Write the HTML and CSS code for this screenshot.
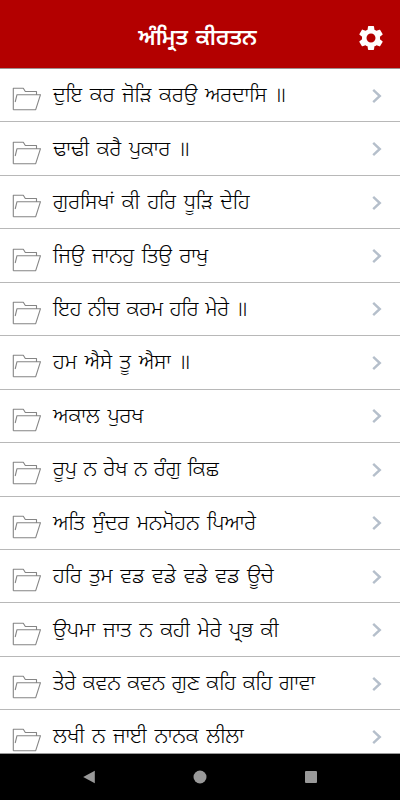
FILE: index.html
```html
<!DOCTYPE html>
<html lang="pa">
<head>
<meta charset="utf-8">
<title>ਅੰਮ੍ਰਿਤ ਕੀਰਤਨ</title>
<link rel="stylesheet" href="styles.css">
</head>
<body>
<svg class="defs" width="0" height="0">
<symbol id="folder" viewBox="0 0 30 24"><path d="M1.3 22.7V1.2h10l2 3.3h11.2V7.2M1.3 22.7h22.4L28.5 7.7H5L3.2 15" fill="none" stroke="#858585" stroke-width="1.1" stroke-linejoin="round"/></symbol>
<symbol id="chevron" viewBox="0 0 10 14"><path d="M1.2.9 7.8 7l-6.6 6.1" fill="none" stroke="#b5bfcb" stroke-width="2.4"/></symbol>
</svg>
<header class="bar">
<h1 class="title">ਅੰਮ੍ਰਿਤ ਕੀਰਤਨ</h1>
<svg class="gear" viewBox="0 0 24 24"><path fill="#fff" d="M19.14 12.94c.04-.3.06-.61.06-.94 0-.32-.02-.64-.07-.94l2.03-1.58c.18-.14.23-.41.12-.61l-1.92-3.32c-.12-.22-.37-.29-.59-.22l-2.39.96c-.5-.38-1.03-.7-1.62-.94l-.36-2.54c-.04-.24-.24-.41-.48-.41h-3.84c-.24 0-.43.17-.47.41l-.36 2.54c-.59.24-1.13.57-1.62.94l-2.39-.96c-.22-.08-.47 0-.59.22L2.74 8.87c-.12.21-.08.47.12.61l2.03 1.58c-.05.3-.09.63-.09.94s.02.64.07.94l-2.03 1.58c-.18.14-.23.41-.12.61l1.92 3.32c.12.22.37.29.59.22l2.39-.96c.5.38 1.03.7 1.62.94l.36 2.54c.05.24.24.41.48.41h3.84c.24 0 .44-.17.47-.41l.36-2.54c.59-.24 1.13-.56 1.62-.94l2.39.96c.22.08.47 0 .59-.22l1.92-3.32c.12-.22.07-.47-.12-.61zM12 15.6c-1.98 0-3.6-1.62-3.6-3.6s1.62-3.6 3.6-3.6 3.6 1.62 3.6 3.6-1.62 3.6-3.6 3.6z"/></svg>
</header>
<ul class="list">
<li class="row"><svg class="folder"><use href="#folder"/></svg><span class="name">ਦੁਇ ਕਰ ਜੋੜਿ ਕਰਉ ਅਰਦਾਸਿ ॥</span><svg class="chev"><use href="#chevron"/></svg></li>
<li class="row"><svg class="folder"><use href="#folder"/></svg><span class="name">ਢਾਢੀ ਕਰੈ ਪੁਕਾਰ ॥</span><svg class="chev"><use href="#chevron"/></svg></li>
<li class="row"><svg class="folder"><use href="#folder"/></svg><span class="name">ਗੁਰਸਿਖਾਂ ਕੀ ਹਰਿ ਧੂੜਿ ਦੇਹਿ</span><svg class="chev"><use href="#chevron"/></svg></li>
<li class="row"><svg class="folder"><use href="#folder"/></svg><span class="name">ਜਿਉ ਜਾਨਹੁ ਤਿਉ ਰਾਖੁ</span><svg class="chev"><use href="#chevron"/></svg></li>
<li class="row"><svg class="folder"><use href="#folder"/></svg><span class="name tight">ਇਹ ਨੀਚ ਕਰਮ ਹਰਿ ਮੇਰੇ ॥</span><svg class="chev"><use href="#chevron"/></svg></li>
<li class="row"><svg class="folder"><use href="#folder"/></svg><span class="name">ਹਮ ਐਸੇ ਤੂ ਐਸਾ ॥</span><svg class="chev"><use href="#chevron"/></svg></li>
<li class="row"><svg class="folder"><use href="#folder"/></svg><span class="name">ਅਕਾਲ ਪੁਰਖ</span><svg class="chev"><use href="#chevron"/></svg></li>
<li class="row"><svg class="folder"><use href="#folder"/></svg><span class="name tight">ਰੂਪੁ ਨ ਰੇਖ ਨ ਰੰਗੁ ਕਿਛ</span><svg class="chev"><use href="#chevron"/></svg></li>
<li class="row"><svg class="folder"><use href="#folder"/></svg><span class="name">ਅਤਿ ਸੁੰਦਰ ਮਨਮੋਹਨ ਪਿਆਰੇ</span><svg class="chev"><use href="#chevron"/></svg></li>
<li class="row"><svg class="folder"><use href="#folder"/></svg><span class="name">ਹਰਿ ਤੁਮ ਵਡ ਵਡੇ ਵਡੇ ਵਡ ਊਚੇ</span><svg class="chev"><use href="#chevron"/></svg></li>
<li class="row"><svg class="folder"><use href="#folder"/></svg><span class="name">ਉਪਮਾ ਜਾਤ ਨ ਕਹੀ ਮੇਰੇ ਪ੍ਰਭ ਕੀ</span><svg class="chev"><use href="#chevron"/></svg></li>
<li class="row"><svg class="folder"><use href="#folder"/></svg><span class="name tight">ਤੇਰੇ ਕਵਨ ਕਵਨ ਗੁਣ ਕਹਿ ਕਹਿ ਗਾਵਾ</span><svg class="chev"><use href="#chevron"/></svg></li>
<li class="row"><svg class="folder"><use href="#folder"/></svg><span class="name">ਲਖੀ ਨ ਜਾਈ ਨਾਨਕ ਲੀਲਾ</span><svg class="chev"><use href="#chevron"/></svg></li>
</ul>
<nav class="nav">
<svg viewBox="0 0 14 14"><path d="M12.8.8v12.4L1.2 7z" fill="#999"/></svg>
<svg viewBox="0 0 14 14"><circle cx="7" cy="7" r="6.5" fill="#999"/></svg>
<svg viewBox="0 0 14 14"><rect x="1" y="1" width="12" height="12" rx="1" fill="#999"/></svg>
</nav>
</body>
</html>
```
FILE: styles.css
```css
* { box-sizing: border-box; }
body {
  margin: 0;
  height: 800px;
  display: flex;
  flex-direction: column;
  overflow: hidden;
  background: #fff;
  font-family: "Noto Sans Gurmukhi", "Noto Sans", sans-serif;
}
.defs { position: absolute; }
.bar {
  flex: none;
  height: 69px;
  padding: 8px 15px 0;
  display: grid;
  grid-template-columns: 28px 1fr 28px;
  align-items: center;
  background: #b30000;
  border-bottom: 1px solid #a09090;
}
.title {
  grid-column: 2;
  margin: 3px 0 0 -5px;
  text-align: center;
  font-size: 22px;
  line-height: 30px;
  font-weight: 600;
  word-spacing: 2px;
  color: #fff;
}
.gear { width: 30px; height: 30px; margin-left: -1px; }
.list {
  flex: none;
  height: 685px;
  margin: 0;
  padding: 0;
  list-style: none;
  overflow: hidden;
  border-bottom: 1px solid #999;
}
.row {
  height: 53.45px;
  padding: 0 18px 0 12px;
  display: flex;
  align-items: center;
  border-bottom: 1px solid #b8b8b8;
}
.folder { width: 30px; height: 24px; margin-top: 8px; flex: none; }
.name {
  flex: 1;
  margin: 4px 0 0 11px;
  font-size: 21.3px;
  font-weight: 340;
  line-height: 30px;
  white-space: nowrap;
  word-spacing: 2.1px;
  color: #000;
}
.tight { word-spacing: 1.1px; }
.chev { width: 10px; height: 14px; flex: none; margin-top: 1px; }
.nav {
  flex: 1;
  display: flex;
  justify-content: space-between;
  align-items: center;
  padding: 0 82px;
  background: #000;
}
.nav svg { width: 14px; height: 14px; }
```
